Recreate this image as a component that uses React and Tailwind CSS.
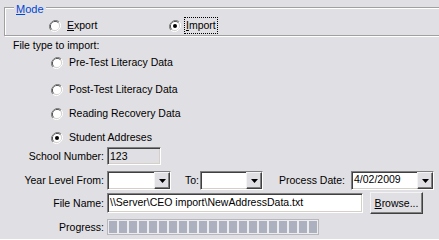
const sunken =
  "border border-t-[#808080] border-l-[#808080] border-r-white border-b-white shadow-[inset_1px_1px_0_#404040,inset_-1px_-1px_0_#d4d0c8]";
const raised =
  "border border-t-[#f4f4f4] border-l-[#f4f4f4] border-r-[#404040] border-b-[#404040] shadow-[inset_-1px_-1px_0_#808080]";

function Radio({ checked }) {
  return (
    <svg width="12" height="12" viewBox="0 0 12 12" className="shrink-0">
      <path d="M10.2 1.8A6 6 0 0 0 1.8 10.2" fill="none" stroke="#808080" strokeWidth="1" />
      <path d="M1.8 10.2A6 6 0 0 0 10.2 1.8" fill="none" stroke="#ffffff" strokeWidth="1" />
      <path d="M9.5 2.5A5 5 0 0 0 2.5 9.5" fill="none" stroke="#404040" strokeWidth="1" />
      <path d="M2.5 9.5A5 5 0 0 0 9.5 2.5" fill="none" stroke="#d4d0c8" strokeWidth="1" />
      <circle cx="6" cy="6" r="4" fill="#ffffff" />
      {checked && <circle cx="6" cy="6" r="2" fill="#000000" />}
    </svg>
  );
}

function Arrow() {
  return (
    <svg width="7" height="4" viewBox="0 0 7 4">
      <path d="M0 0H7L3.5 4Z" fill="#000" />
    </svg>
  );
}

function Combo({ width, value }) {
  return (
    <div className={`flex h-[19px] items-stretch bg-white ${sunken} ${width}`}>
      <div className="flex-1 pl-[2px] leading-[15px]">{value}</div>
      <div className={`flex w-[16px] items-center justify-center bg-[#e0dfe3] ${raised}`}>
        <Arrow />
      </div>
    </div>
  );
}

function Label({ children }) {
  return <div className="w-[104px] shrink-0 text-right">{children}</div>;
}

export default function App() {
  const blocks = Array.from({ length: 21 });

  return (
    <div
      className="w-[439px] h-[239px] overflow-hidden bg-[#e0dfe3] text-[10.5px] leading-[13px] text-black"
      style={{ fontFamily: '"Liberation Sans", Arial, sans-serif' }}
    >
      <div className="relative mt-[7px] ml-[4px] mr-[-20px] h-[29px] border border-[#a0a0a0] shadow-[inset_1px_1px_0_#fff,1px_1px_0_#fff]">
        <span className="absolute top-[-5px] left-[9px] bg-[#e0dfe3] px-[2px] text-[11px] text-[#0046d5]">
          <span className="underline">M</span>ode
        </span>
        <div className="flex items-center pt-[9px]">
          <div className="ml-[44px] flex w-[120px] items-center gap-[6px]">
            <Radio />
            <span>
              <span className="underline">E</span>xport
            </span>
          </div>
          <div className="flex items-center gap-[3px]">
            <Radio checked />
            <span className="border border-dotted border-black px-[1px] py-[1px] leading-[13px]">
              <span className="underline">I</span>mport
            </span>
          </div>
        </div>
      </div>

      <div className="mt-[3px] ml-[13px]">File type to import:</div>

      <div className="ml-[51px] flex flex-col">
        <div className="mt-[4px] flex h-[13px] items-center gap-[6px]">
          <Radio />
          <span>Pre-Test Literacy Data</span>
        </div>
        <div className="mt-[14px] flex h-[13px] items-center gap-[6px]">
          <Radio />
          <span>Post-Test Literacy Data</span>
        </div>
        <div className="mt-[11px] flex h-[13px] items-center gap-[6px]">
          <Radio />
          <span>Reading Recovery Data</span>
        </div>
        <div className="mt-[11px] flex h-[13px] items-center gap-[6px]">
          <Radio checked />
          <span>Student Addreses</span>
        </div>
      </div>

      <div className="mt-[3px] flex items-center gap-[3px]">
        <Label>School Number:</Label>
        <div className={`h-[18px] w-[54px] pl-[2px] leading-[16px] bg-[#e0dfe3] ${sunken}`}>123</div>
      </div>

      <div className="mt-[6px] flex items-center">
        <Label>Year Level From:</Label>
        <div className="ml-[3px]">
          <Combo width="w-[64px]" value="" />
        </div>
        <span className="ml-[14px] w-[15px]">To:</span>
        <Combo width="w-[63px]" value="" />
        <span className="ml-[16px] w-[66px]">Process Date:</span>
        <div className="ml-[6px]">
          <Combo width="w-[83px]" value="4/02/2009" />
        </div>
      </div>

      <div className="mt-[2px] flex items-center">
        <Label>File Name:</Label>
        <div className={`ml-[3px] h-[20px] w-[256px] bg-white pl-[2px] leading-[16px] ${sunken}`}>
          \\Server\CEO import\NewAddressData.txt
        </div>
        <button
          className={`ml-[7px] h-[22px] w-[53px] bg-[#e0dfe3] leading-[13px] ${raised}`}
        >
          <span className="underline">B</span>rowse...
        </button>
      </div>

      <div className="mt-[5px] flex items-center">
        <Label>Progress:</Label>
        <div className="ml-[3px] flex h-[16px] w-[212px] items-center gap-[2px] border border-[#b8b8bc] bg-[#ececee] pl-[1px]">
          {blocks.map((_, i) => (
            <div key={i} className="h-[12px] w-[8px] bg-[#adb0bf]" />
          ))}
        </div>
      </div>
    </div>
  );
}
